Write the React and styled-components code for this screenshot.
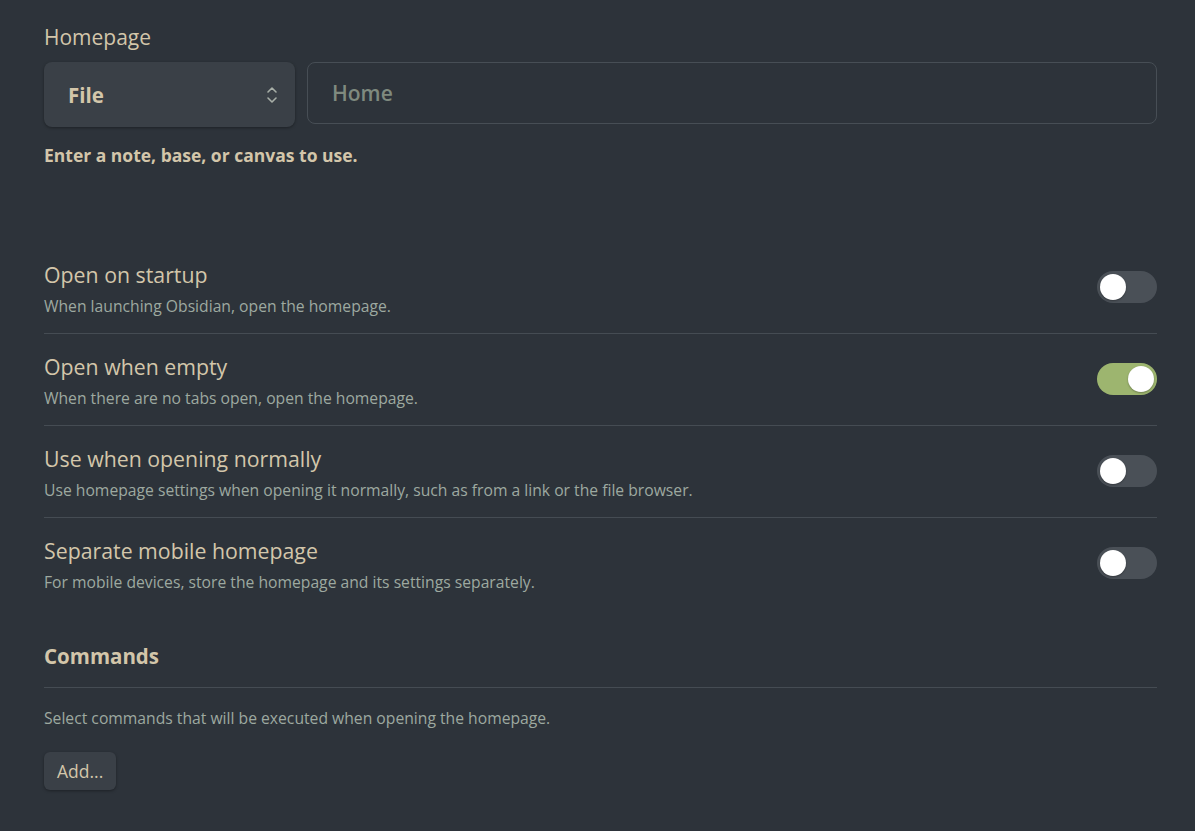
import React from "react";
import styled, { createGlobalStyle } from "styled-components";

const Global = createGlobalStyle`
  html, body { margin: 0; padding: 0; background: #2d333a; }
  body { font-family: "Open Sans", "Noto Sans", sans-serif; color: #d3c6aa; }
`;

const Page = styled.div`
  width: 1113px;
  padding: 24px 38px 30px 44px;
`;

const Heading = styled.div`
  font-size: 21px;
  line-height: 26px;
  color: #d3c6aa;
  margin-bottom: 12px;
`;

const InputRow = styled.div`
  display: flex;
  gap: 12px;
  align-items: flex-start;
`;

const Select = styled.div`
  width: 251px;
  height: 65px;
  box-sizing: border-box;
  background: #3a4047;
  border-radius: 8px;
  box-shadow: 0 1px 3px rgba(0,0,0,0.35);
  display: flex;
  align-items: center;
  justify-content: space-between;
  padding: 0 16px 0 24px;
  font-size: 20.5px;
  font-weight: 700;
  color: #d3c6aa;
`;

const TextInput = styled.div`
  flex: 1;
  height: 62px;
  box-sizing: border-box;
  border: 1px solid #474e55;
  border-radius: 8px;
  display: flex;
  align-items: center;
  padding-left: 24px;
  font-size: 21px;
  font-weight: 600;
  color: #7f8a7f;
`;

const Hint = styled.div`
  margin-top: 16px;
  font-size: 17.5px;
  font-weight: 700;
  line-height: 24px;
  color: #d3c6aa;
`;

const Settings = styled.div`
  margin-top: 75px;
`;

const Row = styled.div`
  display: flex;
  align-items: center;
  justify-content: space-between;
  padding: 19px 0 16px;
  border-top: ${(p) => (p.$first ? "none" : "1px solid #454c53")};
`;

const Info = styled.div`
  display: flex;
  flex-direction: column;
  gap: 6px;
`;

const Title = styled.div`
  font-size: 21.3px;
  line-height: 28px;
  color: #d3c6aa;
`;

const Desc = styled.div`
  font-size: 15.7px;
  line-height: 22px;
  color: #9da9a0;
`;

const Toggle = styled.div`
  width: 60px;
  height: 32px;
  margin-bottom: 4px;
  border-radius: 16px;
  background: ${(p) => (p.$on ? "#9db56f" : "#4a5057")};
  position: relative;
  flex-shrink: 0;
  &::after {
    content: "";
    position: absolute;
    top: 3px;
    left: ${(p) => (p.$on ? "31px" : "3px")};
    width: 26px;
    height: 26px;
    border-radius: 50%;
    background: #fff;
    box-shadow: 0 1px 2px rgba(0,0,0,0.3);
  }
`;

const SectionHeading = styled.div`
  margin-top: 33px;
  font-size: 20.5px;
  font-weight: 700;
  line-height: 28px;
  color: #d3c6aa;
  padding-bottom: 17px;
  border-bottom: 1px solid #454c53;
`;

const SectionDesc = styled(Desc)`
  margin-top: 19px;
`;

const Button = styled.button`
  margin-top: 23px;
  height: 38px;
  padding: 0 13px;
  background: #3a4047;
  border: none;
  border-radius: 6px;
  box-shadow: 0 1px 3px rgba(0,0,0,0.35);
  font-family: inherit;
  font-size: 17.5px;
  color: #d3c6aa;
`;

const Chevron = () => (
  <svg width="14" height="22" viewBox="0 0 14 22" fill="none" stroke="#a8afa8" strokeWidth="1.6" strokeLinecap="round" strokeLinejoin="round">
    <path d="M3 8 L7 4 L11 8" />
    <path d="M3 14 L7 18 L11 14" />
  </svg>
);

const rows = [
  { title: "Open on startup", desc: "When launching Obsidian, open the homepage.", on: false },
  { title: "Open when empty", desc: "When there are no tabs open, open the homepage.", on: true },
  { title: "Use when opening normally", desc: "Use homepage settings when opening it normally, such as from a link or the file browser.", on: false },
  { title: "Separate mobile homepage", desc: "For mobile devices, store the homepage and its settings separately.", on: false },
];

export default function App() {
  return (
    <>
      <Global />
      <Page>
        <Heading>Homepage</Heading>
        <InputRow>
          <Select>
            <span>File</span>
            <Chevron />
          </Select>
          <TextInput>Home</TextInput>
        </InputRow>
        <Hint>Enter a note, base, or canvas to use.</Hint>
        <Settings>
          {rows.map((r, i) => (
            <Row key={r.title} $first={i === 0}>
              <Info>
                <Title>{r.title}</Title>
                <Desc>{r.desc}</Desc>
              </Info>
              <Toggle $on={r.on} />
            </Row>
          ))}
        </Settings>
        <SectionHeading>Commands</SectionHeading>
        <SectionDesc>Select commands that will be executed when opening the homepage.</SectionDesc>
        <Button>Add...</Button>
      </Page>
    </>
  );
}
